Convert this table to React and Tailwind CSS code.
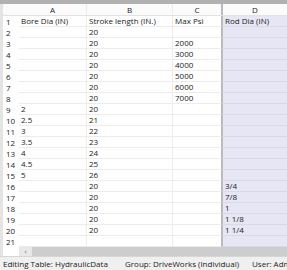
import React from 'react';

const rows = [
  ['Bore Dia (IN)', 'Stroke length (IN.)', 'Max Psi', 'Rod Dia (IN)'],
  ['', '20', '', ''],
  ['', '20', '2000', ''],
  ['', '20', '3000', ''],
  ['', '20', '4000', ''],
  ['', '20', '5000', ''],
  ['', '20', '6000', ''],
  ['', '20', '7000', ''],
  ['2', '20', '', ''],
  ['2.5', '21', '', ''],
  ['3', '22', '', ''],
  ['3.5', '23', '', ''],
  ['4', '24', '', ''],
  ['4.5', '25', '', ''],
  ['5', '26', '', ''],
  ['', '20', '', '3/4'],
  ['', '20', '', '7/8'],
  ['', '20', '', '1'],
  ['', '20', '', '1 1/8'],
  ['', '20', '', '1 1/4'],
  ['', '', '', ''],
];

const App = () => {
  return (
    <div
      className="w-[287px] h-[270px] overflow-hidden bg-white flex flex-col text-[8px] text-[#1b1b1b] leading-none"
      style={{ fontFamily: '"Open Sans", "Noto Sans", sans-serif' }}
    >
      <div className="h-[4px] shrink-0 bg-[#b1b1b1]" />

      {/* column letters */}
      <div className="h-[12px] shrink-0 flex bg-[#fbfbfb] border-b border-[#e2e2e2]">
        <div className="w-[19px] shrink-0 border-l-[3px] border-[#e4e4e4]" />
        <div className="w-[68px] shrink-0 flex items-center justify-center border-r border-[#ececec]">A</div>
        <div className="w-[86px] shrink-0 flex items-center justify-center border-r border-[#ececec]">B</div>
        <div className="w-[48px] shrink-0 flex items-center justify-center">C</div>
        <div className="flex-1 flex items-center justify-center border-l-2 border-[#b9b9c4]">D</div>
      </div>

      {rows.map((r, i) => (
        <div key={i} className="h-[11px] shrink-0 flex">
          <div className="w-[19px] shrink-0 flex items-center pl-[3px] border-l-[3px] border-[#e4e4e4]">{i + 1}</div>
          <div className="w-[68px] shrink-0 flex items-center pl-[2px] border-b border-r border-[#ececec]">{r[0]}</div>
          <div className="w-[86px] shrink-0 flex items-center pl-[2px] border-b border-r border-[#ececec]">{r[1]}</div>
          <div className="w-[48px] shrink-0 flex items-center pl-[2px] border-b border-[#ececec]">{r[2]}</div>
          <div className="flex-1 flex items-center pl-[2px] bg-[#e6e6f4] border-b border-[#d9d9ea] border-l-2 border-l-[#b9b9c4]">{r[3]}</div>
        </div>
      ))}

      {/* horizontal scrollbar */}
      <div className="h-[9px] shrink-0 flex">
        <div className="w-[19px] shrink-0 border-l-[3px] border-[#e4e4e4] bg-white" />
        <div className="w-[13px] shrink-0 flex items-center justify-center bg-[#e8e8e8] text-[#606060] text-[7px]">‹</div>
        <div className="flex-1 bg-[#cdcdcd]" />
      </div>

      {/* status bar */}
      <div className="flex-1 flex items-center bg-[#f0f0f0] border-t border-[#d6d6d6] whitespace-nowrap overflow-hidden">
        <span className="w-[125px] shrink-0 pl-[3px]">Editing Table: HydraulicData</span>
        <span className="w-[127px] shrink-0">Group: DriveWorks (Individual)</span>
        <span className="shrink-0">User: Administrator</span>
      </div>
    </div>
  );
};

export default App;
